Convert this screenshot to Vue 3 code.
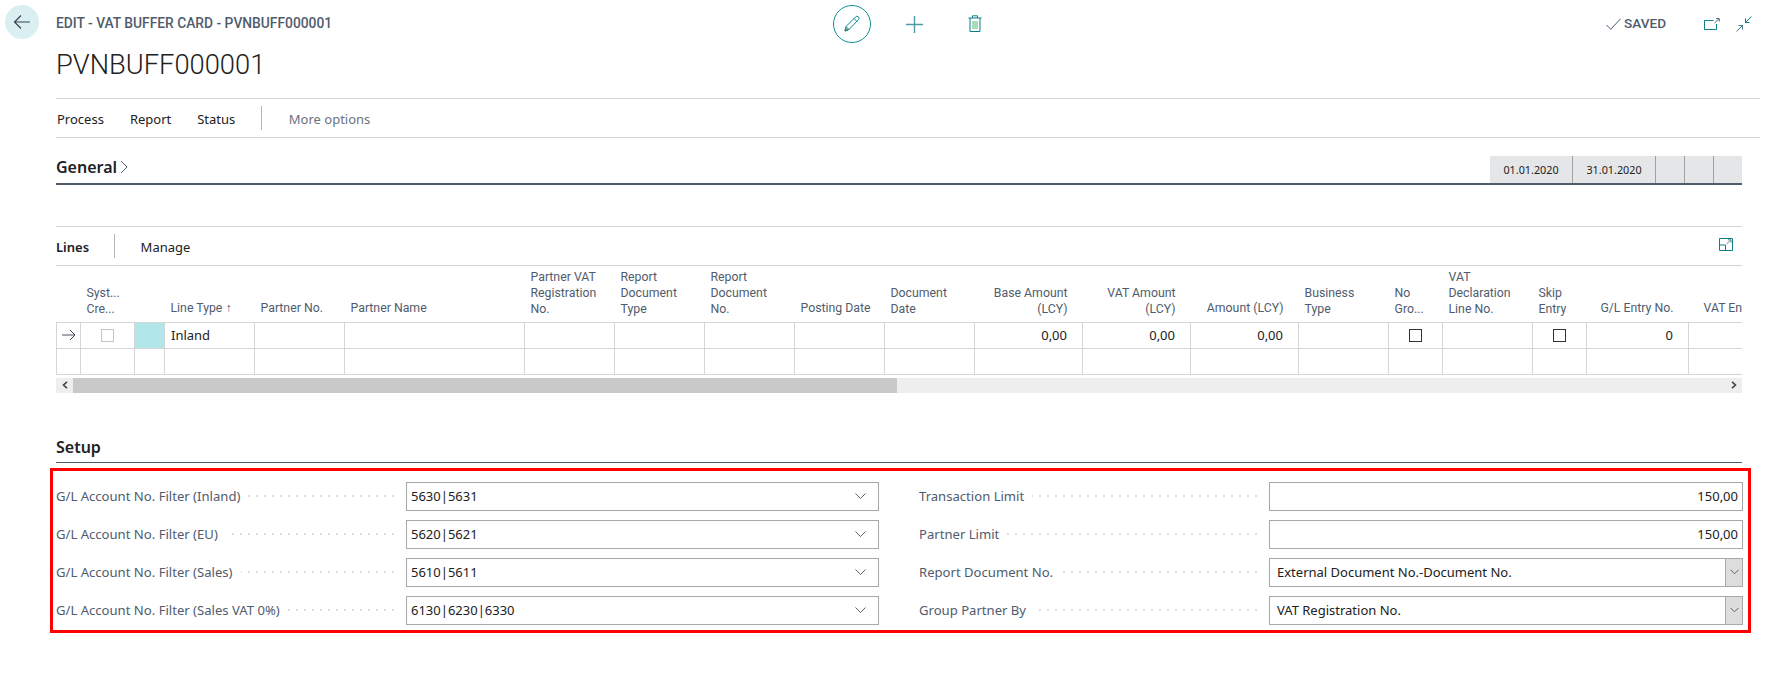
<template>
  <div class="page">
    <header class="top">
      <div class="left">
        <button class="back">
          <svg width="18" height="16" viewBox="0 0 18 16"><path d="M17 8H1.5M8 1.5 1.5 8 8 14.5" fill="none" stroke="#3c4350" stroke-width="1.2" /></svg>
        </button>
        <div class="titles">
          <div class="crumb">EDIT - VAT BUFFER CARD - PVNBUFF000001</div>
          <h1>PVNBUFF000001</h1>
        </div>
      </div>
      <div class="actions">
        <span class="circle">
          <svg width="18" height="18" viewBox="0 0 18 18" fill="none" stroke="#0a8a93" stroke-width="1"><path d="M2 16 3 11.5 12.5 2a1.7 1.7 0 0 1 3 2.6L6 14.5Z" /><path d="M3 11.5 6 14.5M11 3.5l3 3" /><path d="M2 16l3-.8L2.8 13Z" fill="#e7a34e" stroke="#0a8a93" /></svg>
        </span>
        <svg class="plus" width="17" height="17" viewBox="0 0 17 17"><path d="M8.5 0v17M0 8.5h17" stroke="#4f9aa3" stroke-width="1.4" /></svg>
        <svg class="trash" width="14" height="17" viewBox="0 0 14 17" fill="none" stroke="#0a7f88"><path d="M.5 3h13M4.5 3V.8h5V3M2 3v13.5h10V3" /><path d="M5 6v8M7 6v8M9 6v8" stroke="#54b878" /></svg>
      </div>
      <div class="status">
        <svg class="check" width="15" height="12" viewBox="0 0 15 12"><path d="M.5 7 4.8 11.3 14.5.8" fill="none" stroke="#4a5a6c" /></svg>
        <span class="saved">SAVED</span>
        <svg class="open" width="16" height="12" viewBox="0 0 16 12" fill="none" stroke="#0a7f88"><path d="M9.5 2.5H.5v9h12V6" /><path d="M10.5 5 15 .8M12 .6h3.3v3" stroke="#4a6a7a" /></svg>
        <svg class="collapse" width="16" height="16" viewBox="0 0 16 16" fill="none" stroke="#0a7f88"><path d="M15.5.5 9.5 6.5M9.5 2.5v4h4" /><path d="M.5 15.5l6-6M6.5 13.5v-4h-4" stroke="#4a7a8a" /></svg>
      </div>
    </header>

    <nav class="menu">
      <span>Process</span>
      <span>Report</span>
      <span>Status</span>
      <i class="sep"></i>
      <span class="more">More options</span>
    </nav>

    <section class="general">
      <div class="section-name">General
        <svg width="8" height="14" viewBox="0 0 8 14"><path d="M1 1l6 6-6 6" fill="none" stroke="#505c6d" /></svg>
      </div>
      <div class="dates">
        <span class="wide">01.01.2020</span>
        <span class="wide">31.01.2020</span>
        <span></span>
        <span></span>
        <span></span>
      </div>
    </section>

    <div class="lines-bar">
      <strong>Lines</strong>
      <i class="sep"></i>
      <span>Manage</span>
      <svg class="expand" width="14" height="13" viewBox="0 0 14 13" fill="none" stroke="#0a7f88"><path d="M.5 12.5V.5h13v12ZM.5 7H6.5v5.5" /><path d="M7.5 6 12 1.8M9 1.8h3v3" stroke="#6a8a96" /></svg>
    </div>

    <div class="table-wrap">
      <table>
        <colgroup>
          <col v-for="col in columns" :key="col.key" :style="{ width: col.width + 'px' }" />
        </colgroup>
        <thead>
          <tr>
            <th v-for="col in columns" :key="col.key" :class="{ num: col.num, single: col.head.length === 1, cut: col.key === 'vent' }">
              <div v-for="line in col.head" :key="line">{{ line }}</div>
            </th>
          </tr>
        </thead>
        <tbody>
          <tr>
            <td class="arrow">
              <svg width="14" height="12" viewBox="0 0 14 12"><path d="M0 6h13M8 1l5 5-5 5" fill="none" stroke="#4a5160" /></svg>
            </td>
            <td class="center"><i class="box light"></i></td>
            <td class="style-cell"></td>
            <td>Inland</td>
            <td></td>
            <td></td>
            <td></td>
            <td></td>
            <td></td>
            <td></td>
            <td></td>
            <td class="num">0,00</td>
            <td class="num">0,00</td>
            <td class="num">0,00</td>
            <td></td>
            <td class="center"><i class="box"></i></td>
            <td></td>
            <td class="center"><i class="box"></i></td>
            <td class="num">0</td>
            <td></td>
          </tr>
          <tr>
            <td v-for="col in columns" :key="col.key"></td>
          </tr>
        </tbody>
      </table>
    </div>

    <div class="scrollbar">
      <span class="arrow-btn">
        <svg width="6" height="8" viewBox="0 0 6 8"><path d="M5 .8 1.5 4 5 7.2" fill="none" stroke="#444" stroke-width="1.6" /></svg>
      </span>
      <span class="thumb"></span>
      <span class="arrow-btn end">
        <svg width="6" height="8" viewBox="0 0 6 8"><path d="M1 .8 4.5 4 1 7.2" fill="none" stroke="#444" stroke-width="1.6" /></svg>
      </span>
    </div>

    <h2 class="setup-title">Setup</h2>

    <div class="setup">
      <div class="col">
        <div class="field" v-for="f in leftFields" :key="f.label">
          <label>{{ f.label }}</label>
          <i class="dots"></i>
          <div class="input">
            <span>{{ f.value }}</span>
            <svg width="11" height="6" viewBox="0 0 11 6"><path d="M.5.5l5 5 5-5" fill="none" stroke="#5a6270" /></svg>
          </div>
        </div>
      </div>
      <div class="col right">
        <div class="field" v-for="f in rightFields" :key="f.label">
          <label>{{ f.label }}</label>
          <i class="dots"></i>
          <div class="input" :class="{ num: f.num, select: f.select }">
            <span>{{ f.value }}</span>
            <span v-if="f.select" class="drop">
              <svg width="9" height="6" viewBox="0 0 9 6"><path d="M.5.8l4 4 4-4" fill="none" stroke="#5a6270" /></svg>
            </span>
          </div>
        </div>
      </div>
    </div>
  </div>
</template>

<script setup>
const columns = [
  { key: 'mark', width: 24, head: [''] },
  { key: 'sys', width: 54, head: ['Syst...', 'Cre...'] },
  { key: 'style', width: 30, head: [''] },
  { key: 'type', width: 90, head: ['Line Type ↑'] },
  { key: 'pno', width: 90, head: ['Partner No.'] },
  { key: 'pname', width: 180, head: ['Partner Name'] },
  { key: 'preg', width: 90, head: ['Partner VAT', 'Registration', 'No.'] },
  { key: 'rtype', width: 90, head: ['Report', 'Document', 'Type'] },
  { key: 'rno', width: 90, head: ['Report', 'Document', 'No.'] },
  { key: 'post', width: 90, head: ['Posting Date'] },
  { key: 'doc', width: 90, head: ['Document', 'Date'] },
  { key: 'base', width: 108, num: true, head: ['Base Amount', '(LCY)'] },
  { key: 'vat', width: 108, num: true, head: ['VAT Amount', '(LCY)'] },
  { key: 'amt', width: 108, num: true, head: ['Amount (LCY)'] },
  { key: 'biz', width: 90, head: ['Business', 'Type'] },
  { key: 'nogro', width: 54, head: ['No', 'Gro...'] },
  { key: 'decl', width: 90, head: ['VAT', 'Declaration', 'Line No.'] },
  { key: 'skip', width: 54, head: ['Skip', 'Entry'] },
  { key: 'gl', width: 102, num: true, head: ['G/L Entry No.'] },
  { key: 'vent', width: 90, head: ['VAT Entry No.'] }
]

const leftFields = [
  { label: 'G/L Account No. Filter (Inland)', value: '5630|5631' },
  { label: 'G/L Account No. Filter (EU)', value: '5620|5621' },
  { label: 'G/L Account No. Filter (Sales)', value: '5610|5611' },
  { label: 'G/L Account No. Filter (Sales VAT 0%)', value: '6130|6230|6330' }
]

const rightFields = [
  { label: 'Transaction Limit', value: '150,00', num: true },
  { label: 'Partner Limit', value: '150,00', num: true },
  { label: 'Report Document No.', value: 'External Document No.-Document No.', select: true },
  { label: 'Group Partner By', value: 'VAT Registration No.', select: true }
]
</script>

<style>
html,
body {
  background: #fff;
  overflow: hidden;
}
</style>

<style scoped>
.page {
  width: 1777px;
  height: 679px;
  overflow: hidden;
  font-family: "Noto Sans", "Open Sans", sans-serif;
  font-size: 13px;
  color: #212121;
}
.top {
  height: 98px;
  display: flex;
  padding-left: 5px;
}
.left {
  width: 828px;
  display: flex;
}
.back {
  width: 34px;
  height: 34px;
  margin-top: 5px;
  border: 0;
  border-radius: 50%;
  background: #d9eff2;
  display: flex;
  align-items: center;
  justify-content: center;
  padding: 0;
}
.titles {
  margin-left: 17px;
}
.crumb {
  margin-top: 15px;
  font-family: Roboto, sans-serif;
  font-size: 13.8px;
  font-weight: 500;
  line-height: 16px;
  color: #505c6d;
  white-space: nowrap;
}
h1 {
  margin: 16px 0 0;
  font-family: Roboto, sans-serif;
  font-size: 27.3px;
  font-weight: 300;
  line-height: 36px;
  color: #212121;
}
.actions {
  display: flex;
  align-items: flex-start;
}
.circle {
  width: 38px;
  height: 38px;
  margin-top: 5px;
  border: 1px solid #0f8e96;
  border-radius: 50%;
  box-sizing: border-box;
  display: flex;
  align-items: center;
  justify-content: center;
}
.plus {
  margin: 16px 0 0 35px;
}
.trash {
  margin: 15px 0 0 45px;
}
.status {
  margin-left: auto;
  display: flex;
  align-items: flex-start;
  padding-right: 25px;
}
.check {
  margin-top: 18px;
}
.saved {
  margin: 15px 0 0 3px;
  font-family: Roboto, sans-serif;
  font-size: 13.6px;
  font-weight: 500;
  line-height: 16px;
  color: #505c6d;
  width: 42px;
}
.open {
  margin: 18px 0 0 38px;
}
.collapse {
  margin: 16px 0 0 16px;
}
.menu {
  width: 1703px;
  margin-left: 56px;
  padding-left: 1px;
  height: 38px;
  border-top: 1px solid #d5d5dc;
  border-bottom: 1px solid #d5d5dc;
  display: flex;
  align-items: center;
  line-height: 18px;
}
.menu span {
  margin-right: 26px;
  padding-top: 1px;
}
.sep {
  display: block;
  width: 1px;
  height: 24px;
  background: #b5b5bb;
}
.menu .sep {
  margin-right: 26.5px;
}
.menu .more {
  color: #6b7280;
}
.general {
  width: 1686px;
  margin-left: 56px;
  margin-top: 17px;
  height: 28px;
  border-bottom: 2px solid #505c6d;
  display: flex;
  justify-content: space-between;
  align-items: flex-end;
}
.section-name {
  font-size: 16px;
  font-weight: 600;
  line-height: 26px;
  margin-bottom: 3px;
  display: flex;
  align-items: center;
  gap: 3px;
}
.dates {
  display: flex;
  height: 27px;
  background: #e5e6e8;
}
.dates span {
  width: 28px;
  border-left: 1px solid #a0a0a0;
  font-size: 10.8px;
  line-height: 27px;
  text-align: center;
}
.dates span:first-child {
  border-left: 0;
}
.dates .wide {
  width: 82px;
}
.lines-bar {
  width: 1686px;
  margin-left: 56px;
  margin-top: 41px;
  height: 38px;
  border-top: 1px solid #d5d5dc;
  border-bottom: 1px solid #d5d5dc;
  display: flex;
  align-items: center;
}
.lines-bar strong {
  font-size: 13px;
  font-weight: 600;
  margin-right: 25px;
  padding-top: 1px;
}
.lines-bar span {
  padding-top: 1px;
}
.lines-bar .sep {
  margin-right: 25.5px;
}
.expand {
  margin-left: auto;
  margin-right: 9px;
  margin-bottom: 3px;
}
.table-wrap {
  width: 1686px;
  margin-left: 56px;
  overflow: hidden;
}
table {
  width: 1722px;
  table-layout: fixed;
  border-collapse: collapse;
}
th {
  height: 56px;
  padding: 0 6px 5px;
  box-sizing: border-box;
  vertical-align: bottom;
  text-align: left;
  font-family: Roboto, sans-serif;
  font-size: 12.3px;
  font-weight: 400;
  line-height: 16px;
  color: #505c6d;
  white-space: nowrap;
}
th.single {
  padding-bottom: 6px;
}
th.num {
  padding-right: 15px;
  text-align: right;
}
th.cut {
  padding-left: 15px;
}
td {
  height: 26px;
  padding: 0 6px;
  box-sizing: border-box;
  border: 1px solid #d5d5dc;
  line-height: 18px;
  white-space: nowrap;
}
td.num {
  padding-right: 15px;
  text-align: right;
}
td.arrow {
  padding: 0 0 0 5px;
  line-height: 0;
}
td.center {
  padding: 0;
  text-align: center;
  line-height: 0;
}
.style-cell {
  background: #b2e7ea;
}
.box {
  display: inline-block;
  width: 13px;
  height: 13px;
  border: 1px solid #333;
  box-sizing: border-box;
}
.box.light {
  border-color: #c4c4c4;
}
.scrollbar {
  width: 1686px;
  margin: 3px 0 0 56px;
  height: 15px;
  background: #eee;
  display: flex;
}
.arrow-btn {
  width: 17px;
  display: flex;
  align-items: center;
  justify-content: center;
}
.arrow-btn.end {
  margin-left: auto;
}
.thumb {
  width: 824px;
  background: #c9c9c9;
}
.setup-title {
  width: 1686px;
  margin: 44px 0 0 56px;
  height: 25px;
  border-bottom: 1px solid #505c6d;
  font-size: 16px;
  font-weight: 600;
  line-height: 20px;
  color: #212121;
}
.setup {
  width: 1692px;
  height: 148px;
  margin: 5px 0 0 50px;
  border: 3px solid #ff0000;
  display: flex;
  padding: 11px 0 0 3px;
}
.col {
  width: 823px;
  display: flex;
  flex-direction: column;
  gap: 9px;
}
.col.right {
  margin-left: 40px;
  width: 824px;
}
.field {
  display: flex;
  align-items: center;
  height: 29px;
}
label {
  color: #505c6d;
  white-space: nowrap;
  font-size: 13.1px;
}
.dots {
  flex: 1;
  height: 2px;
  margin: 0 12px 0 8px;
  background-image: repeating-linear-gradient(to left, #dddddd 0 2px, transparent 2px 8px);
}
.input {
  width: 473px;
  height: 29px;
  box-sizing: border-box;
  border: 1px solid #a8a8a8;
  padding: 0 12px 0 4px;
  display: flex;
  align-items: center;
  justify-content: space-between;
}
.col.right .input {
  width: 474px;
}
.input.num {
  justify-content: flex-end;
  padding-right: 4px;
}
.input.select {
  padding: 0 0 0 7px;
  align-items: stretch;
  line-height: 27px;
}
.drop {
  width: 18px;
  background: #ddd;
  border: 1px solid #a8a8a8;
  margin: -1px -1px -1px 0;
  display: flex;
  align-items: center;
  justify-content: center;
  box-sizing: border-box;
}
</style>
